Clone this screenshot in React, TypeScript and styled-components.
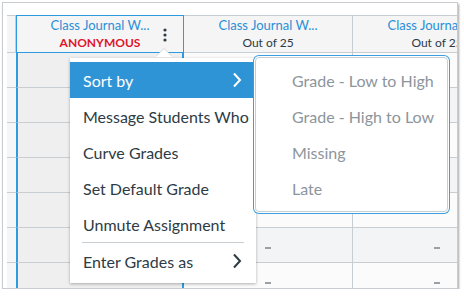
import React from 'react';
import styled, { createGlobalStyle } from 'styled-components';

const GlobalStyle = createGlobalStyle`
  html, body {
    margin: 0;
    padding: 0;
    background: #ffffff;
  }
  body {
    font-family: Lato, 'Noto Sans', sans-serif;
  }
`;

const columns = [
  { title: 'Class Journal W...', sub: 'ANONYMOUS', selected: true },
  { title: 'Class Journal W...', sub: 'Out of 25', selected: false },
  { title: 'Class Journal W...', sub: 'Out of 25', selected: false },
];

const rows = [0, 1, 2, 3, 4, 5, 6];

const menuItems = [
  { label: 'Sort by', sub: true, active: true },
  { label: 'Message Students Who' },
  { label: 'Curve Grades' },
  { label: 'Set Default Grade' },
  { label: 'Unmute Assignment', divider: true },
  { label: 'Enter Grades as', sub: true },
];

const sortItems = ['Grade - Low to High', 'Grade - High to Low', 'Missing', 'Late'];

const Chevron: React.FC<{ color: string }> = ({ color }) => (
  <svg width="10" height="16" viewBox="0 0 10 16">
    <path d="M2 1.5 L8 8 L2 14.5" fill="none" stroke={color} strokeWidth="2" />
  </svg>
);

const Kebab = () => (
  <svg width="4" height="14" viewBox="0 0 4 14">
    <circle cx="2" cy="2" r="1.6" fill="#2d3b45" />
    <circle cx="2" cy="7" r="1.6" fill="#2d3b45" />
    <circle cx="2" cy="12" r="1.6" fill="#2d3b45" />
  </svg>
);

export default function App() {
  return (
    <>
      <GlobalStyle />
      <Frame>
        <Grid>
          <HeaderStub />
          {columns.map((c, i) => (
            <HeaderCell key={i} selected={c.selected}>
              <HeaderTitle>{c.title}</HeaderTitle>
              <HeaderSub anonymous={c.selected}>{c.sub}</HeaderSub>
              {c.selected && (
                <KebabSpot>
                  <Kebab />
                </KebabSpot>
              )}
            </HeaderCell>
          ))}
          {rows.map((r) => (
            <React.Fragment key={r}>
              <StubCell />
              {columns.map((c, i) => (
                <BodyCell key={i} selected={c.selected} odd={r % 2 === 1}>
                  {!c.selected && <Dash />}
                </BodyCell>
              ))}
            </React.Fragment>
          ))}
        </Grid>

        <Caret />
        <Menu>
          {menuItems.map((m) => (
            <React.Fragment key={m.label}>
              <MenuItem active={m.active}>
                <span>{m.label}</span>
                {m.sub && <Chevron color={m.active ? '#ffffff' : '#2d3b45'} />}
              </MenuItem>
              {m.divider && <Divider />}
            </React.Fragment>
          ))}
        </Menu>

        <SubMenu>
          {sortItems.map((s) => (
            <SubItem key={s}>{s}</SubItem>
          ))}
        </SubMenu>
      </Frame>
    </>
  );
}

const Frame = styled.div`
  position: relative;
  margin: 2px 0 0 2px;
  width: 450px;
  height: 273px;
  border: 1px solid #c8ccd0;
  box-shadow: 1px 2px 2px rgba(0, 0, 0, 0.35);
  overflow: hidden;
  background: #ffffff;
  padding: 12px 0 0 4px;
  box-sizing: content-box;
`;

const Grid = styled.div`
  display: grid;
  grid-template-columns: 9px 168px 169px 169px;
  grid-auto-rows: 35px;
  grid-template-rows: 38px;
`;

const HeaderStub = styled.div`
  background: #f5f5f5;
  border-top: 1px solid #c7cdd1;
  border-bottom: 1px solid #c7cdd1;
  border-right: 1px solid #c7cdd1;
`;

const HeaderCell = styled.div<{ selected?: boolean }>`
  position: relative;
  background: #f5f5f5;
  box-sizing: border-box;
  display: flex;
  flex-direction: column;
  align-items: center;
  padding-top: 1px;
  border-left: ${(p) => (p.selected ? '1px solid #2d9be0' : 'none')};
  border-top: 1px solid ${(p) => (p.selected ? '#2d9be0' : '#c7cdd1')};
  border-bottom: 1px solid ${(p) => (p.selected ? '#2d9be0' : '#c7cdd1')};
  border-right: 1px solid ${(p) => (p.selected ? '#2d9be0' : '#c7cdd1')};
`;

const HeaderTitle = styled.div`
  font-size: 13px;
  line-height: 17px;
  color: #2a8fd8;
  white-space: nowrap;
`;

const HeaderSub = styled.div<{ anonymous?: boolean }>`
  font-size: 12px;
  line-height: 18px;
  color: ${(p) => (p.anonymous ? '#e0132b' : '#2d3b45')};
  font-weight: ${(p) => (p.anonymous ? 700 : 400)};
  white-space: nowrap;
`;

const KebabSpot = styled.div`
  position: absolute;
  left: 146px;
  top: 12px;
  display: flex;
`;

const StubCell = styled.div`
  background: #f5f6f8;
  border-bottom: 1px solid #c7cdd1;
`;

const BodyCell = styled.div<{ selected?: boolean; odd?: boolean }>`
  box-sizing: border-box;
  display: flex;
  align-items: center;
  justify-content: center;
  padding-top: 5px;
  background: ${(p) => (p.selected ? '#efefef' : p.odd ? '#f3f4f6' : '#fbfbfb')};
  border-bottom: 1px solid #c7cdd1;
  border-left: ${(p) => (p.selected ? '2px solid #2d9be0' : 'none')};
  border-right: ${(p) => (p.selected ? '2px solid #2d9be0' : '1px solid #c7cdd1')};
`;

const Dash = styled.span`
  display: block;
  width: 6px;
  height: 2px;
  background: #9aa2a8;
`;

const Caret = styled.div`
  position: absolute;
  left: 153px;
  top: 46px;
  width: 0;
  height: 0;
  border-left: 8px solid transparent;
  border-right: 8px solid transparent;
  border-bottom: 8px solid #ffffff;
  filter: drop-shadow(0 -1px 0 #d4d8db);
  z-index: 3;
`;

const Menu = styled.div`
  position: absolute;
  left: 67px;
  top: 55px;
  width: 186px;
  padding: 4px 0 4px;
  background: #ffffff;
  box-shadow: 0 1px 3px rgba(0, 0, 0, 0.3);
  z-index: 2;
`;

const MenuItem = styled.div<{ active?: boolean }>`
  height: 36px;
  display: flex;
  align-items: center;
  justify-content: space-between;
  padding: 0 14px 0 13px;
  font-size: 16px;
  color: ${(p) => (p.active ? '#ffffff' : '#2d3b45')};
  background: ${(p) => (p.active ? '#2f94d6' : 'transparent')};
  white-space: nowrap;
`;

const Divider = styled.div`
  height: 1px;
  margin: 0 12px;
  background: #c7cdd1;
`;

const SubMenu = styled.div`
  position: absolute;
  left: 252px;
  top: 54px;
  width: 193px;
  height: 155px;
  padding-top: 4px;
  box-sizing: border-box;
  background: #ffffff;
  border: 1px solid #c7cdd1;
  border-radius: 4px;
  box-shadow: 0 0 0 1px #ffffff, 0 0 0 2px #3a9ee0;
  z-index: 4;
`;

const SubItem = styled.div`
  height: 36px;
  display: flex;
  align-items: center;
  padding-left: 36px;
  font-size: 16px;
  color: #8d959c;
  white-space: nowrap;
`;
